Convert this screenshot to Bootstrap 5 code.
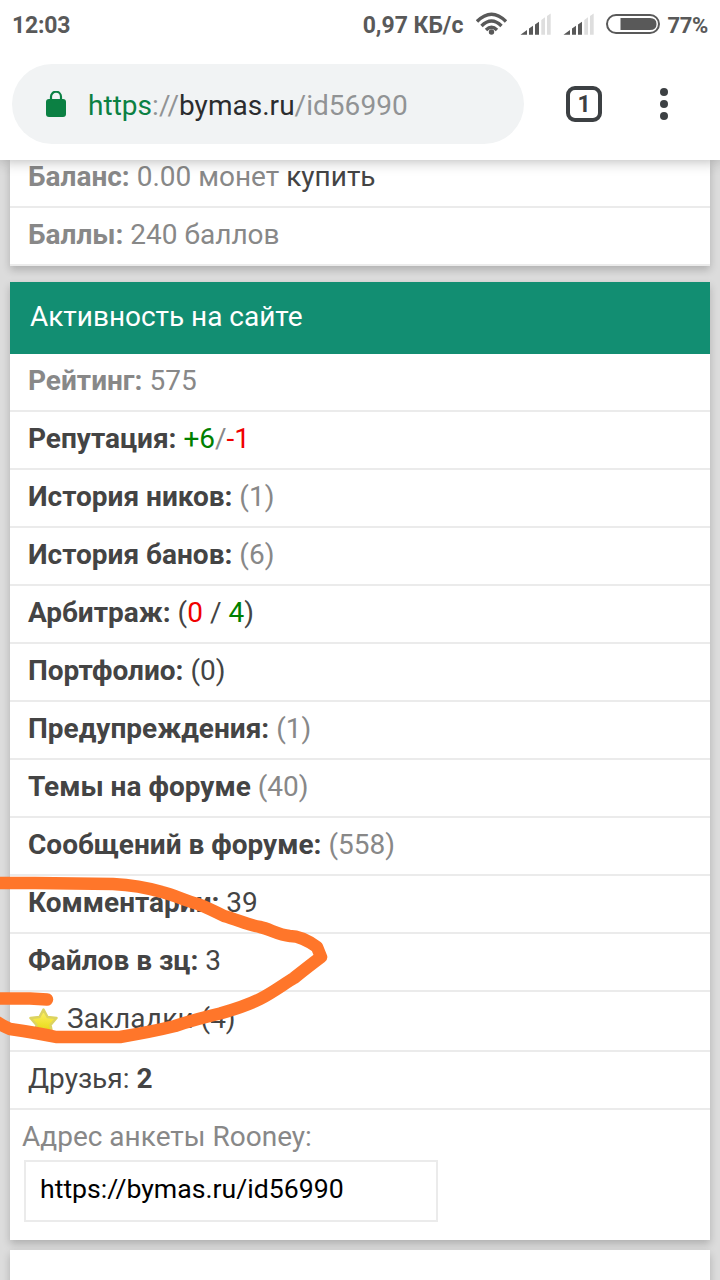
<!DOCTYPE html>
<html lang="ru">
<head>
  <meta charset="UTF-8">
  <meta name="viewport" content="width=device-width, initial-scale=1.0">
  <title>bymas.ru/id56990</title>
  <link href="https://cdn.jsdelivr.net/npm/bootstrap@5.3.0/dist/css/bootstrap.min.css" rel="stylesheet">
  <style>
    body { background: #dcdcdc; font-family: Roboto, "Liberation Sans", sans-serif; font-size: 28px; line-height: 40px; color: #888; height: 1280px; overflow: hidden; }
    svg { display: block; flex: none; }
    .browser { background: #fff; height: 160px; box-shadow: 0 0 14px rgba(0,0,0,.32); z-index: 2; }
    .status { height: 50px; padding: 2px 12px 0 12px; font-size: 23px; font-weight: 700; color: #595959; line-height: 50px; }
    .clock { letter-spacing: -.2px; }
    .status-icons { margin: -2px 7px 0 13px; }
    .charge { font-size: 22px; letter-spacing: -.3px; }
    .omnibox { height: 80px; margin: 14px 0 0 12px; width: 512px; background: #f1f3f4; color: #919395; padding: 2px 0 0 34px; }
    .omnibox .scheme { color: #0b8043; }
    .omnibox .host { color: #2b2c2e; }
    .url { margin: 1px 0 0 22px; letter-spacing: .03px; }
    .tabs { width: 36px; height: 36px; border: 4px solid #3c4043; border-radius: 9px; color: #3c4043; font-size: 23px; font-weight: 700; margin: 0 57px 0 42px; line-height: 30px; }
    .tools { margin-top: 14px; }
    .block { background: #fff; margin: 0 10px; box-shadow: 0 4px 8px rgba(0,0,0,.2); }
    .block-title { background: #128e72; color: #fff; height: 72px; line-height: 70px; padding-left: 20px; letter-spacing: -.03px; }
    .line { height: 58px; border-bottom: 2px solid #ebebeb; padding: 7px 18px 0; white-space: nowrap; }
    .first-line { height: 48px; padding-top: 0; line-height: 34px; }
    .line a { color: #444; text-decoration: none; }
    .line .plus { color: #008000; }
    .line .minus { color: #f00000; }
    .bookmarks { height: 60px; }
    .bookmarks-text { margin-left: 7px; }
    .address { height: 130px; padding: 7px 12px 0; }
    .address-field { display: block; width: 414px; height: 62px; margin: 3px 0 0 2px; border: 2px solid #ebebeb; padding: 0 14px 4px; font-size: 26.67px; color: #000; outline: 0; }
    .next-block { height: 60px; margin-top: 10px; }
    .scribble { left: 0; top: 860px; z-index: 3; pointer-events: none; }
  </style>
</head>
<body class="position-relative">
  <header class="browser position-relative">
    <div class="status d-flex align-items-center">
      <span class="clock me-auto">12:03</span>
      <span class="speed">0,97 КБ/с</span>
      <svg class="status-icons" width="184" height="50" viewBox="476 0 184 50">
        <g fill="none" stroke="#595959" stroke-width="3.4">
          <path d="M477 21.500Q491.500 7 506 21.500"/>
          <path d="M481.500 26Q491.500 16 501.500 26"/>
          <path d="M486 30Q491.500 24.500 497 30"/>
        </g>
        <circle cx="491.500" cy="32" r="2.700" fill="#595959"/>
        <g id="signal" fill="#595959">
          <path d="M520.500 34.700L527 30V34.700ZM529 28.500L533 25.700V34.700H529ZM535 24.500L539 21.700V34.700H535Z"/>
          <path fill="#dedede" d="M541.300 20L545 17.300V34.700H541.300ZM547 16L550.700 13.500V34.700H547Z"/>
        </g>
        <use href="#signal" x="43"/>
        <rect x="607" y="15" width="52" height="18" rx="9" fill="#fff" stroke="#595959" stroke-width="2"/>
        <path fill="#595959" d="M620.500 18H650Q656.500 18 656.500 24T650 30H620.500Z"/>
      </svg>
      <span class="charge">77%</span>
    </div>
    <div class="d-flex align-items-center">
      <div class="omnibox rounded-pill d-flex align-items-center">
        <svg width="20" height="28" viewBox="0 0 20 28">
          <rect y="8" width="20" height="18" rx="3" fill="#0b8043"/>
          <path d="M5 9.500V5.700a5 5 0 0 1 10 0V9.500" fill="none" stroke="#0b8043" stroke-width="2.200"/>
        </svg>
        <span class="url"><span class="scheme">https</span>://<span class="host">bymas.ru</span>/id56990</span>
      </div>
      <div class="tools d-flex align-items-center">
        <div class="tabs text-center">1</div>
        <svg width="10" height="34" viewBox="0 0 10 34" fill="#3c4043">
          <circle cx="5" cy="5" r="4"/><circle cx="5" cy="17" r="4"/><circle cx="5" cy="29" r="4"/>
        </svg>
      </div>
    </div>
  </header>

  <main>
    <section class="block">
      <div class="line first-line"><b>Баланс:</b> 0.00 монет <a href="#">купить</a></div>
      <div class="line"><b>Баллы:</b> 240 баллов</div>
    </section>

    <section class="block mt-3">
      <div class="block-title">Активность на сайте</div>
      <div class="line"><b>Рейтинг:</b> 575</div>
      <div class="line"><a href="#"><b>Репутация:</b></a> <span class="plus">+6</span>/<span class="minus">-1</span></div>
      <div class="line"><a href="#"><b>История ников:</b></a> (1)</div>
      <div class="line"><a href="#"><b>История банов:</b></a> (6)</div>
      <div class="line"><a href="#"><b>Арбитраж:</b> (<span class="minus">0</span> / <span class="plus">4</span>)</a></div>
      <div class="line"><a href="#"><b>Портфолио:</b> (0)</a></div>
      <div class="line"><a href="#"><b>Предупреждения:</b></a> (1)</div>
      <div class="line"><a href="#"><b>Темы на форуме</b></a> (40)</div>
      <div class="line"><a href="#"><b>Сообщений в форуме:</b></a> (558)</div>
      <div class="line"><a href="#"><b>Комментарии:</b> 39</a></div>
      <div class="line"><a href="#"><b>Файлов в зц:</b> 3</a></div>
      <div class="line bookmarks">
        <a href="#" class="d-flex">
          <svg width="32" height="34" viewBox="0 0 32 34">
            <defs>
              <linearGradient id="gold" x2="0" y2="1"><stop stop-color="#fff36b"/><stop offset="1" stop-color="#e5d50c"/></linearGradient>
            </defs>
            <path d="M15.500 10.500L19.500 18L28.500 19L22.500 26L24 34L15.500 30L7 34L8.500 26L2.500 19L11.500 18Z" fill="url(#gold)" stroke="#dcd360" stroke-width="2.500" stroke-linejoin="round"/>
          </svg>
          <span class="bookmarks-text">Закладки (4)</span>
        </a>
      </div>
      <div class="line"><a href="#">Друзья: <b>2</b></a></div>
      <div class="address">
        <div>Адрес анкеты Rooney:</div>
        <input class="address-field" type="text" value="https://bymas.ru/id56990">
      </div>
    </section>

    <section class="block next-block"></section>
  </main>

  <svg class="scribble position-absolute" width="350" height="200" viewBox="0 860 350 200" fill="none" stroke="#ff762a" stroke-width="12.500" stroke-linecap="round" stroke-linejoin="round">
    <path d="M-8 883H35L113 884C132 885 148 888 162 892C174 895 186 901 198 904C208 908 216 912 224 916C238 920 248 925 260 927C270 929 278 935 290 936C300 936 310 942 317 947L321 957C313 963 304 970 294 978C284 984 272 993 260 999C248 1005 236 1009 220 1013.500C205 1017 190 1021 175 1026C155 1031 138 1034 120 1037H56C38 1033 24 1031 10 1029Q-2 1024 -8 1018"/>
    <path d="M-8 998.500H30L47 999.500"/>
  </svg>

  <script src="https://cdn.jsdelivr.net/npm/bootstrap@5.3.0/dist/js/bootstrap.bundle.min.js"></script>
</body>
</html>
